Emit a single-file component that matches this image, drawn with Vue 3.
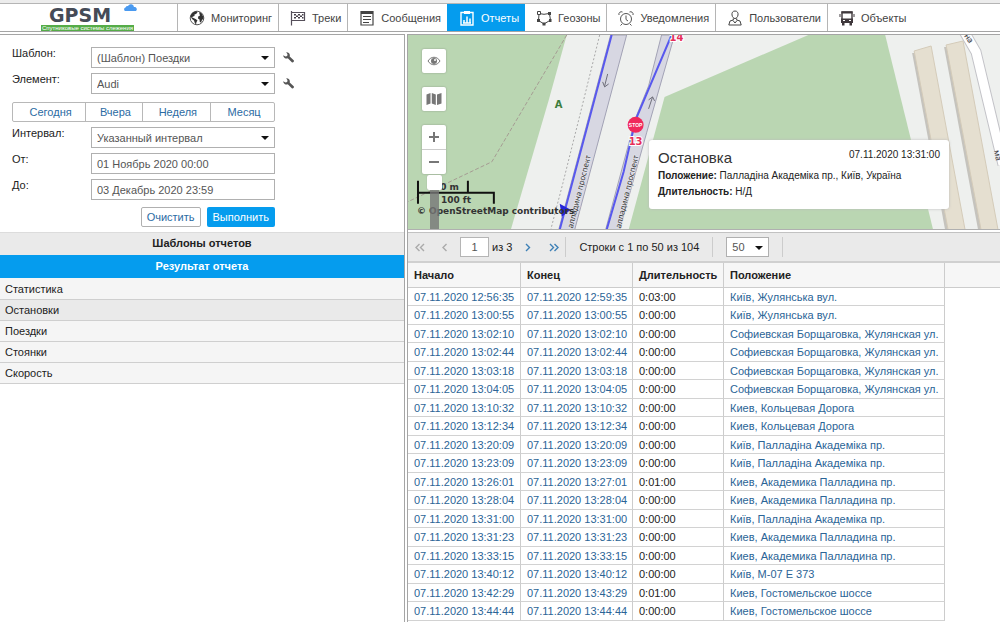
<script setup>
import { ref } from 'vue'

const tabs = [
  { id: 'monitoring', label: 'Мониторинг' },
  { id: 'tracks', label: 'Треки' },
  { id: 'messages', label: 'Сообщения' },
  { id: 'reports', label: 'Отчеты' },
  { id: 'geozones', label: 'Геозоны' },
  { id: 'alerts', label: 'Уведомления' },
  { id: 'users', label: 'Пользователи' },
  { id: 'objects', label: 'Объекты' },
]
const activeTab = ref('reports')
const sections = ['Статистика', 'Остановки', 'Поездки', 'Стоянки', 'Скорость']
const activeSection = ref('Остановки')
const from = ref('01 Ноябрь 2020 00:00')
const to = ref('03 Декабрь 2020 23:59')
const page = ref('1')

const soft = 'Софиевская Борщаговка, Жулянская ул.'
const day = '07.11.2020 '
const rows = [
  ['12:56:35', '12:59:35', '0:03:00', 'Київ, Жулянська вул.'],
  ['13:00:55', '13:00:55', '0:00:00', 'Київ, Жулянська вул.'],
  ['13:02:10', '13:02:10', '0:00:00', soft],
  ['13:02:44', '13:02:44', '0:00:00', soft],
  ['13:03:18', '13:03:18', '0:00:00', soft],
  ['13:04:05', '13:04:05', '0:00:00', soft],
  ['13:10:32', '13:10:32', '0:00:00', 'Киев, Кольцевая Дорога'],
  ['13:12:34', '13:12:34', '0:00:00', 'Киев, Кольцевая Дорога'],
  ['13:20:09', '13:20:09', '0:00:00', 'Київ, Палладіна Академіка пр.'],
  ['13:23:09', '13:23:09', '0:00:00', 'Київ, Палладіна Академіка пр.'],
  ['13:26:01', '13:27:01', '0:01:00', 'Киев, Академика Палладина пр.'],
  ['13:28:04', '13:28:04', '0:00:00', 'Киев, Академика Палладина пр.'],
  ['13:31:00', '13:31:00', '0:00:00', 'Київ, Палладіна Академіка пр.'],
  ['13:31:23', '13:31:23', '0:00:00', 'Киев, Академика Палладина пр.'],
  ['13:33:15', '13:33:15', '0:00:00', 'Киев, Академика Палладина пр.'],
  ['13:40:12', '13:40:12', '0:00:00', 'Київ, М-07 Е 373'],
  ['13:42:29', '13:43:29', '0:01:00', 'Киев, Гостомельское шоссе'],
  ['13:44:44', '13:44:44', '0:00:00', 'Киев, Гостомельское шоссе'],
]
</script>

<template>
  <div class="app">
    <header class="top">
      <a class="logo" href="#">
        <span class="logo-name">GPSM</span>
        <span class="logo-sub">Спутниковые системы слежения</span>
        <svg class="cloud" width="15" height="9" viewBox="0 0 15 9"><path d="M2 8a2 2 0 0 1 .5-3.600A2.500 2.500 0 0 1 5 3a3.200 3.200 0 0 1 6 1 2.300 2.300 0 0 1 2 4z" fill="#4a9af0" /></svg>
      </a>
      <nav class="tabs">
        <button v-for="t in tabs" :key="t.id" type="button" class="tab" :class="{ active: t.id === activeTab }" @click="activeTab = t.id">
          <svg class="tab-icon" viewBox="0 0 16 16" aria-hidden="true">
            <template v-if="t.id === 'monitoring'">
              <circle cx="8" cy="8" r="6.800" fill="#fff" stroke="#555" />
              <path d="M1.500 6C2.500 3 4.500 1.500 7.500 1.300L8.500 2.500 7 4l-1.500.5L5.500 6 4 6.500 3 7.500l1.500.5 2.500 1.200L8.500 10.500 7.500 12 7 14.500 5.800 13 5 10.500 3 9z" fill="#333" />
              <path d="M10 2l2.500 1.200L14.200 6.500 14.500 8.500 13 10l-1 2.500-1.200-.5L10.500 9.500 9 8.500 9.200 6.500 11 5.500 10.500 4z" fill="#333" />
            </template>
            <template v-else-if="t.id === 'tracks'">
              <path d="M1.500 1v14.500M1.500 2.500h13v8h-13" fill="none" stroke="#554f5a" stroke-width="1.200" />
              <path d="M4 4h2v1.500H4zM8 4h2v1.500H8zM12 4h1.500v1.500H12zM6 5.500h2V7H6zM10 5.500h2V7h-2zM4 7h2v1.500H4zM8 7h2v1.500H8zM12 7h1.500v1.500H12z" fill="#443f49" />
            </template>
            <template v-else-if="t.id === 'messages'">
              <path d="M2 1.500h12v13.500H2z" fill="#fff" stroke="#444" stroke-width="1.200" />
              <path d="M2 1h12v3H2z" fill="#444" />
              <path d="M4 6.500h8M4 9.500h8M4 12.500h6" stroke="#444" />
            </template>
            <template v-else-if="t.id === 'reports'">
              <path d="M2 2.500h12V15H2z" fill="none" stroke="#fff" stroke-width="1.400" />
              <path d="M5 1h6v3H5z" fill="#fff" />
              <path d="M5 13v-3M8 13V6.500M11 13V8.500M4 13h8" stroke="#fff" stroke-width="1.500" fill="none" />
            </template>
            <template v-else-if="t.id === 'geozones'">
              <path d="M3 3.500l5 .8 5-.8M13.500 4l1 6L8 14 2.500 10.500 3 4" fill="none" stroke="#444" />
              <path d="M1.500 1.500h3v3h-3z" fill="#fff" stroke="#444" />
              <path d="M12 2h3v3h-3zM6.500 12.500h3v3h-3zM1 9h3v3H1zM13 9h2.500v3H13z" fill="#444" />
            </template>
            <template v-else-if="t.id === 'alerts'">
              <circle cx="8" cy="9" r="5.500" fill="none" stroke="#555" />
              <path d="M8 5.500V9.500l2 1.500M4 14l-1.500 1.500M12 14l1.500 1.500M1 5a2.500 2.500 0 0 1 3.500-3M15 5a2.500 2.500 0 0 0-3.500-3" fill="none" stroke="#555" />
            </template>
            <template v-else-if="t.id === 'users'">
              <path d="M8 1c2.500 0 3.300 2 3 4-.3 2-1.500 3.500-3 3.500S5.300 7 5 5C4.700 3 5.500 1 8 1zM6.300 8.500v1.500L3 11l-1.200 4h12.400L13 11l-3.300-1V8.500M6 10.500l2 2.500 2-2.500" fill="none" stroke="#444" />
            </template>
            <template v-else>
              <path d="M3 2h10v8H3z" fill="#fff" stroke="#3f383c" stroke-width="1.400" />
              <path d="M2.500 1.500h11v2h-11zM2 8.500h12V13H2zM3 13h2.500v2.500H3zM10.500 13H13v2.500h-2.500zM.5 4h1v3h-1zM14.500 4h1v3h-1z" fill="#3f383c" />
              <path d="M4 10.500h2M10 10.500h2" stroke="#fff" />
            </template>
          </svg>
          <span>{{ t.label }}</span>
        </button>
      </nav>
    </header>

    <main class="body">
      <section class="side">
        <form class="form" @submit.prevent>
          <div class="row">
            <label for="tpl">Шаблон:</label>
            <span class="drop"><select id="tpl"><option>(Шаблон) Поездки</option></select></span>
            <button type="button" class="wrench" aria-label="Настроить шаблон">
              <svg width="11" height="11" viewBox="0 0 11 11"><path d="M3.200.2a3.300 3.300 0 0 1 3.500 4.200l4 3.900c.5.6.2 1.200-.2 1.700-.5.500-1.200.7-1.700.2L4.800 6.300A3.300 3.300 0 0 1 .2 3.200l2.300 1.200 1.700-.4.300-1.700z" fill="#555" /></svg>
            </button>
          </div>
          <div class="row">
            <label for="unit">Элемент:</label>
            <span class="drop"><select id="unit"><option>Audi</option></select></span>
            <button type="button" class="wrench" aria-label="Настроить элемент">
              <svg width="11" height="11" viewBox="0 0 11 11"><path d="M3.200.2a3.300 3.300 0 0 1 3.500 4.200l4 3.900c.5.6.2 1.200-.2 1.700-.5.500-1.200.7-1.700.2L4.800 6.300A3.300 3.300 0 0 1 .2 3.200l2.300 1.200 1.700-.4.300-1.700z" fill="#555" /></svg>
            </button>
          </div>
          <div class="quick">
            <button type="button">Сегодня</button>
            <button type="button">Вчера</button>
            <button type="button">Неделя</button>
            <button type="button">Месяц</button>
          </div>
          <div class="row">
            <label for="interval">Интервал:</label>
            <span class="drop"><select id="interval"><option>Указанный интервал</option></select></span>
          </div>
          <div class="row">
            <label for="from">От:</label>
            <input id="from" v-model="from" type="text" />
          </div>
          <div class="row">
            <label for="to">До:</label>
            <input id="to" v-model="to" type="text" />
          </div>
          <div class="actions">
            <button type="reset" class="clear">Очистить</button>
            <button type="submit" class="run">Выполнить</button>
          </div>
        </form>
        <h2 class="band">Шаблоны отчетов</h2>
        <h2 class="band blue">Результат отчета</h2>
        <ul class="sections">
          <li v-for="s in sections" :key="s">
            <button type="button" :class="{ current: s === activeSection }" @click="activeSection = s">{{ s }}</button>
          </li>
        </ul>
      </section>

      <section class="content">
        <div class="map">
          <svg class="map-art" viewBox="407 35 593 195" preserveAspectRatio="xMinYMin slice">
            <path d="M407 35h593v195H407z" fill="#eef0ee" />
            <path d="M407 35h159l-18 65-38 130H407z" fill="#bad6b2" />
            <path d="M808 35h77l48 195H628l36-133z" fill="#bad6b2" />
            <path d="M566 35L491 162 407 202" fill="none" stroke="#a59c93" stroke-dasharray="4 2" />
            <path d="M599 35L580 112 562 184 550 230" fill="none" stroke="#a8a8a8" stroke-dasharray="2 2" />
            <path d="M610 35h16L574 230h-16z" fill="#d7d7e2" stroke="#a2a2b5" />
            <path d="M661 35h13L646 133 619 230h-14l22-82 8-30 13-32z" fill="#d7d7e2" stroke="#a2a2b5" />
            <path d="M912 53l3 0 35 177h-5z" fill="#c5c3bd" />
            <path d="M914 51l17-5 34 184h-17z" fill="#e5dfd0" stroke="#d4cbb9" />
            <path d="M944 47l3 0 36 183h-5z" fill="#c5c3bd" />
            <path d="M946 45l17-4 35 189h-17z" fill="#e5dfd0" stroke="#d4cbb9" />
            <path d="M962 28L976 52 1003 165" fill="none" stroke="#c3c3c8" stroke-width="11" />
            <path d="M962 28L976 52 1003 165" fill="none" stroke="#fff" stroke-width="9" />
            <path d="M611 35L559 230M671 35L635 120 623 172 606 230" fill="none" stroke="#5858ee" stroke-width="2" />
            <path d="M607 74l-3 12M602 82l2 5 4-3M648 109l4-12M648 100l4-3 2 4" fill="none" stroke="#6f6f7a" />
            <path d="M559 204l11 6-9 7z" fill="#2424d8" />
            <text class="road" transform="translate(572 229) rotate(-76)">алладина проспект</text>
            <text class="road" transform="translate(620 229) rotate(-76)">алладина проспект</text>
            <text class="road" transform="translate(964 36) rotate(55)">на</text>
            <text class="road" transform="translate(994 151) rotate(78)">ма</text>
            <text class="tree" x="554" y="108">A</text>
            <circle cx="635" cy="125" r="8" fill="#f0285c" />
            <text class="stop" x="635" y="127">STOP</text>
            <text class="num" x="635" y="145">13</text>
            <text class="num" x="676" y="41">14</text>
            <path d="M417 181v23M467 181v12M417 193h76v11" fill="none" stroke="#111" stroke-width="2" />
            <text class="mark" x="433" y="190">30 m</text>
            <text class="mark" x="440" y="203">100 ft</text>
            <text class="mark" x="416" y="214">© OpenStreetMap contributors</text>
          </svg>
          <div class="controls">
            <button type="button" class="ctl" aria-label="Видимость">
              <svg width="14" height="12" viewBox="0 0 14 12"><path d="M1 6c3-5 9-5 12 0-3 5-9 5-12 0z" fill="#fff" stroke="#777" /><circle cx="7" cy="6" r="3" fill="#777" /><circle cx="8" cy="5" r="1" fill="#fff" /></svg>
            </button>
            <button type="button" class="ctl" aria-label="Слои карты">
              <svg width="16" height="12" viewBox="0 0 16 12"><path d="M.5 1.500L4.500 0v10.500L.5 12zM5.800 0l4 1.500V12l-4-1.500zM11 1.500L15.500 0v10.500L11 12z" fill="#777" /></svg>
            </button>
            <div class="zoom">
              <button type="button" aria-label="Приблизить"><svg width="10" height="10"><path d="M5 0v10M0 5h10" stroke="#777" stroke-width="2" /></svg></button>
              <button type="button" aria-label="Отдалить"><svg width="10" height="10"><path d="M0 5h10" stroke="#777" stroke-width="2" /></svg></button>
            </div>
            <div class="slider"><i class="thumb"></i><i class="track"></i></div>
          </div>
          <article class="popup">
            <div class="popup-head"><h3>Остановка</h3><time>07.11.2020 13:31:00</time></div>
            <p><b>Положение:</b> Палладіна Академіка пр., Київ, Україна</p>
            <p><b>Длительность:</b> Н/Д</p>
          </article>
        </div>

        <div class="pager">
          <button type="button" class="arrow first off" aria-label="Первая"><svg width="10" height="9"><path d="M4.500 1L1 4.500 4.500 8M9 1L5.500 4.500 9 8" /></svg></button>
          <button type="button" class="arrow prev off" aria-label="Предыдущая"><svg width="6" height="9"><path d="M4.500 1L1 4.500 4.500 8" /></svg></button>
          <input v-model="page" class="page" type="text" aria-label="Страница" />
          <span class="of">из 3</span>
          <button type="button" class="arrow next" aria-label="Следующая"><svg width="6" height="9"><path d="M1 1l3.500 3.500L1 8" /></svg></button>
          <button type="button" class="arrow last" aria-label="Последняя"><svg width="10" height="9"><path d="M1 1l3.500 3.500L1 8M5.500 1L9 4.500 5.500 8" /></svg></button>
          <span class="info">Строки с 1 по 50 из 104</span>
          <span class="drop size"><select aria-label="Строк на странице"><option>50</option></select></span>
          <span class="sep"></span>
        </div>

        <div class="table-wrap">
          <table>
            <colgroup><col class="c1" /><col class="c2" /><col class="c3" /><col class="c4" /><col /></colgroup>
            <thead><tr><th>Начало</th><th>Конец</th><th>Длительность</th><th>Положение</th><td></td></tr></thead>
            <tbody>
              <tr v-for="r in rows" :key="r[0]">
                <td><a href="#">{{ day + r[0] }}</a></td>
                <td><a href="#">{{ day + r[1] }}</a></td>
                <td>{{ r[2] }}</td>
                <td><a href="#">{{ r[3] }}</a></td>
              </tr>
            </tbody>
          </table>
        </div>
      </section>
    </main>
  </div>
</template>

<style>
body { background: #fff; overflow: hidden; }
</style>

<style scoped>
.app { height: 100vh; display: flex; flex-direction: column; overflow: hidden; font: 11px/14px "Liberation Sans", Arial, sans-serif; color: #222; }
.app * { box-sizing: border-box; }
button, input, select { font: inherit; color: inherit; margin: 0; padding: 0; border: 0; background: none; border-radius: 0; outline: 0; }
a { color: #2b6496; text-decoration: none; }
h2, h3, p, ul { margin: 0; padding: 0; list-style: none; }

.top { display: flex; flex: none; height: 32px; border-top: 3px solid #ececec; border-bottom: 1px solid #a5a5a5; box-shadow: inset 0 1px #b5b5b5; }
.logo { position: relative; width: 177px; flex: none; display: flex; flex-direction: column; padding: 2px 0 0 41px; }
.logo-name { font: bold 19px/20px "DejaVu Sans", sans-serif; color: #454b57; padding-left: 8px; }
.logo-sub { width: 93px; height: 6px; background: #55ac48; color: #fff; font-size: 6px; line-height: 6px; text-align: center; white-space: nowrap; }
.cloud { position: absolute; left: 123px; top: 0; }
.tabs { display: flex; padding-top: 1px; }
.tab { display: flex; align-items: center; gap: 6px; padding: 0 6px 0 11px; border-left: 1px solid #b5b5b5; color: #444; white-space: nowrap; cursor: pointer; }
.tab.active { padding-right: 5px; background: #059cee; border-color: #059cee; color: #fff; }
.tab.active + .tab { border-color: #059cee; }
.tab-icon { width: 16px; height: 16px; flex: none; }

.body { flex: 1; min-height: 0; display: flex; gap: 2px; margin-top: 2px; }
.side { width: 405px; flex: none; border-top: 1px solid #a5a5a5; border-right: 1px solid #a5a5a5; }
.content { flex: 1; min-width: 0; display: flex; flex-direction: column; border-top: 1px solid #a5a5a5; border-left: 1px solid #a5a5a5; }

.form { padding: 12px 12px 5px; display: flex; flex-direction: column; gap: 5px; }
.row { display: flex; height: 21px; color: #222; }
.row label { width: 79px; flex: none; line-height: 13px; }
.row input, .drop { width: 184px; height: 21px; border: 1px solid #b0b0b0; color: #555; background: #fff; }
.row input { padding-left: 5px; }
.drop { position: relative; display: block; }
.drop select { appearance: none; width: 100%; height: 100%; padding-left: 5px; display: block; }
.drop::after { content: ""; position: absolute; right: 5px; top: 8px; border: 4px solid transparent; border-top-color: #111; border-bottom: 0; pointer-events: none; }
.wrench { margin-left: 8px; height: 21px; display: flex; align-items: center; }
.quick { display: flex; width: 263px; height: 20px; margin-top: 3px; border: 1px solid #b8b8b8; border-radius: 2px; }
.quick button { flex: 74 1 0; padding-left: 3px; color: #2b6ba3; line-height: 18px; }
.quick button:nth-child(2) { flex-grow: 56; }
.quick button:nth-child(3) { flex-grow: 69; }
.quick button:nth-child(4) { flex-grow: 64; }
.quick button + button { border-left: 1px solid #b8b8b8; }
.actions { width: 263px; display: flex; justify-content: flex-end; gap: 6px; margin-top: 2px; }
.actions button { height: 20px; border-radius: 2px; padding: 0 5px; }
.actions .clear { border: 1px solid #b0b0b0; color: #2b6ba3; }
.actions .run { padding: 0 6px; background: #059cee; color: #fff; }
.band { height: 23px; font-size: 11px; line-height: 21px; text-align: center; background: #eaeaea; border-top: 1px solid #dcdcdc; }
.band.blue { background: #059cee; color: #fff; border-color: #059cee; }
.sections { padding-top: 1px; background: #f5f5f5; }
.sections button { display: block; width: 100%; height: 21px; padding-left: 5px; text-align: left; background: #f5f5f5; border-bottom: 1px solid #cfcfcf; }
.sections button.current { background: #eaeaea; }

.map { position: relative; height: 195px; flex: none; overflow: hidden; border-bottom: 1px solid #b0b0b0; }
.map-art { display: block; width: 100%; height: 100%; }
.road { font: 8px "Noto Sans", sans-serif; fill: #333; paint-order: stroke; stroke: #e8e8ef; stroke-width: 1px; }
.tree { font: bold 10px "DejaVu Sans", sans-serif; fill: #3c7d3c; }
.stop { font: bold 5px "Liberation Sans", sans-serif; fill: #fff; text-anchor: middle; }
.num { font: bold 10px "DejaVu Sans", sans-serif; fill: #e62e5a; text-anchor: middle; paint-order: stroke; stroke: #fff; stroke-width: 2px; }
.mark { font: bold 9px "DejaVu Sans", sans-serif; fill: #333; }
.controls { position: absolute; left: 14px; top: 14px; width: 24px; display: flex; flex-direction: column; gap: 14px; }
.ctl, .zoom { background: #fff; border-radius: 2px; box-shadow: 0 0 2px #8a9a86; }
.ctl { height: 24px; display: flex; align-items: center; justify-content: center; }
.zoom button { width: 24px; height: 24px; display: flex; align-items: center; justify-content: center; }
.zoom button + button { border-top: 1px solid #ccc; height: 25px; }
.slider { display: flex; flex-direction: column; align-items: center; margin-top: -13px; }
.thumb { width: 15px; height: 15px; background: #fff; border-radius: 2px; box-shadow: 0 0 1px #888; }
.track { width: 9px; height: 42px; background: #777; opacity: 0.8; }
.popup { position: absolute; left: 241px; top: 105px; width: 300px; padding: 8px 9px 9px; background: #fff; border-radius: 3px; box-shadow: 0 0 3px #bbb; font-size: 10px; }
.popup-head { display: flex; justify-content: space-between; }
.popup h3 { font-size: 15px; line-height: 20px; font-weight: normal; color: #333; }
.popup p { line-height: 16px; white-space: nowrap; }

.pager { display: flex; align-items: center; height: 31px; flex: none; margin-top: 2px; background: #eaeaea; border-top: 1px solid #c2c2c2; border-bottom: 2px solid #d0d0d0; white-space: nowrap; }
.arrow { display: flex; }
.arrow path { fill: none; stroke: #3e80b6; stroke-width: 1.4px; }
.arrow.off path { stroke: #aaa; }
.first { margin-left: 7px; }
.prev { margin-left: 17px; }
.page { width: 29px; height: 20px; margin-left: 12px; background: #fff; border: 1px solid #b5b5b5; text-align: center; color: #555; }
.of { margin-left: 3px; }
.next { margin-left: 13px; }
.last { margin-left: 18px; }
.info { margin-left: 6px; padding: 3px 13px; border: 1px solid #ccc; border-width: 0 1px; }
.drop.size { width: 43px; height: 20px; margin-left: 13px; }
.sep { width: 1px; height: 20px; margin-left: 13px; background: #ccc; }

.table-wrap { flex: 1; min-height: 0; overflow: hidden; }
table { width: 100%; table-layout: fixed; border-collapse: separate; border-spacing: 0; white-space: nowrap; }
.c1 { width: 113px; }
.c2 { width: 112px; }
.c3 { width: 91px; }
.c4 { width: 221px; }
thead th, thead td { height: 25px; padding: 0 0 0 6px; text-align: left; background: #f6f6f6; border-right: 1px solid #ccc; border-bottom: 1px solid #ccc; font-weight: bold; }
thead td { border-right: 0; }
tbody td { height: 18px; padding: 0 0 0 6px; line-height: 14px; border-right: 1px solid #ccc; border-bottom: 1px solid #d2d2d2; }
tbody tr:nth-child(even) td { height: 19px; }
</style>
